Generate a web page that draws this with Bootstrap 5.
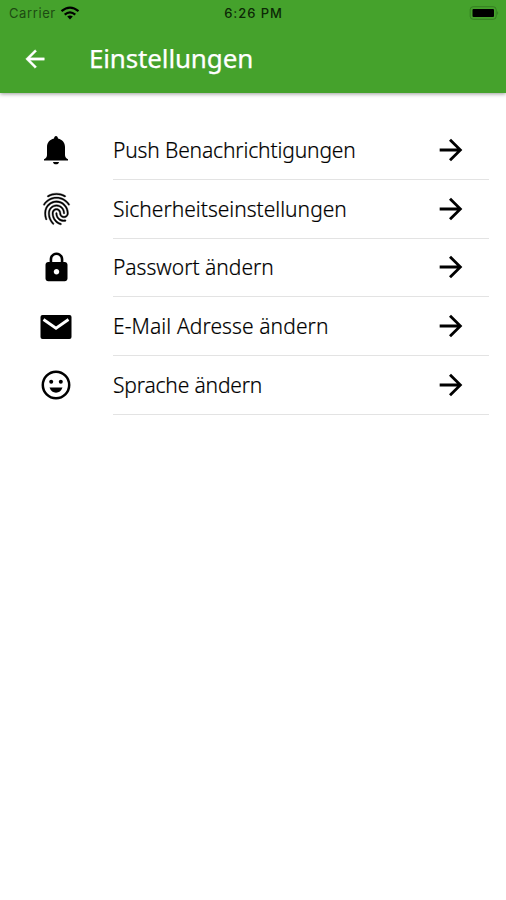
<!DOCTYPE html>
<html lang="de">
<head>
<meta charset="utf-8">
<meta name="viewport" content="width=device-width, initial-scale=1">
<title>Einstellungen</title>
<link rel="stylesheet" href="https://cdn.jsdelivr.net/npm/bootstrap@5.3.0/dist/css/bootstrap.min.css">
<style>
body{font-family:"Noto Sans",sans-serif;color:#000;min-height:900px}
svg{display:block;flex:none}
.app-top{background:#45a22c;height:93px;box-shadow:0 1px 4px rgba(0,0,0,.4)}
.status{height:26px;padding:0 7px 0 9px;font:13px/26px Inter,sans-serif;color:#0c2806;display:grid;grid-template-columns:1fr auto 1fr}
.carrier{letter-spacing:.6px;color:#1d4a12}
.clock{font-weight:500;letter-spacing:.95px;margin-left:-1px}
.titlebar{height:66px;padding-left:21px}
.titlebar h1{font-size:26px;line-height:64px;margin:0 0 2px 40px;font-weight:400;letter-spacing:-.15px;-webkit-text-stroke:.25px #fff}
.settings{padding:28px 17px 0 0}
.setting{height:58.75px;color:#000}
.glyph{width:113px;padding-right:1px}
.line{border-bottom:1.5px solid #e3e3e3;padding-right:21px}
.label{font-size:21px;font-weight:300;line-height:30px;white-space:nowrap;-webkit-text-stroke:.2px #000}
.l1{letter-spacing:-.14px}
.l4{letter-spacing:.1px}
.l5{letter-spacing:-.16px}
</style>
<script src="https://cdn.jsdelivr.net/npm/bootstrap@5.3.0/dist/js/bootstrap.bundle.min.js"></script>
</head>
<body class="bg-white">
<header class="app-top">
  <div class="status">
    <div class="d-flex align-items-center gap-1"><span class="carrier">Carrier</span>
      <svg width="20" height="15" viewBox="0 0 20 15" fill="none" stroke="#000" stroke-width="2.2"><path d="M1.500 5.200Q10-1.800 18.500 5.200M4.700 8.700Q10 4.200 15.300 8.700"/><path d="M7.200 10.600Q10 8.400 12.800 10.600L10 13.400Z" fill="#000" stroke="none"/></svg>
    </div>
    <span class="clock">6:26 PM</span>
    <div class="d-flex align-items-center justify-content-end">
      <svg width="30" height="14" viewBox="0 0 30 14"><rect x="1.200" y=".7" width="26" height="12.600" rx="3" fill="none" stroke="#357e22"/><rect x="3.500" y="3" width="21.500" height="8" rx="1" fill="#000"/><path d="M28.200 5q2 2 0 4z" fill="#357e22"/></svg>
    </div>
  </div>
  <div class="titlebar d-flex align-items-center text-white">
    <svg width="28" height="28" viewBox="0 0 24 24" fill="#fff" stroke="#fff" stroke-width=".3"><path d="M20 11H7.830l5.590-5.590L12 4l-8 8 8 8 1.410-1.410L7.830 13H20z"/></svg>
    <h1>Einstellungen</h1>
  </div>
</header>
<main class="settings">
  <a href="#" class="setting d-flex text-decoration-none">
    <span class="glyph d-flex align-items-center justify-content-center"><svg width="32" height="32" viewBox="0 0 32 32"><path d="M16 2c1.200 0 1.800.9 2 2.400 4.400 1.100 7 4.100 7 8.600v8c0 2 1 3.200 3 4.200V26.500H4v-1.300c2-1 3-2.200 3-4.200v-8c0-4.500 2.600-7.500 7-8.600C14.200 2.900 14.800 2 16 2zM13 28h6c-.2 1.500-1.300 2.300-3 2.300s-2.800-.8-3-2.300z"/></svg></span>
    <span class="line flex-grow-1 d-flex align-items-center justify-content-between"><span class="label l1">Push Benachrichtigungen</span><svg width="34" height="34" viewBox="0 0 24 24"><path d="M12 4l-1.410 1.410L16.170 11H4v2h12.170l-5.580 5.590L12 20l8-8z"/></svg></span>
  </a>
  <a href="#" class="setting d-flex text-decoration-none">
    <span class="glyph d-flex align-items-center justify-content-center"><svg width="35" height="38" viewBox="0 0 24 24" preserveAspectRatio="none"><path stroke="#000" stroke-width=".25" d="M17.81 4.47c-.08 0-.16-.02-.23-.06C15.66 3.42 14 3 12.010 3c-1.980 0-3.860.470-5.570 1.410-.24.130-.54.040-.68-.2-.13-.24-.04-.55.2-.68C7.820 2.520 9.860 2 12.010 2c2.130 0 3.990.470 6.030 1.520.25.130.34.430.21.670-.09.18-.26.28-.44.28zM3.500 9.720c-.1 0-.2-.03-.29-.09-.23-.16-.28-.47-.12-.7.99-1.400 2.250-2.500 3.750-3.270C9.980 4.040 14 4.030 17.150 5.650c1.500.77 2.760 1.860 3.750 3.250.16.220.11.540-.12.700-.23.160-.54.110-.7-.12-.9-1.260-2.040-2.250-3.390-2.940-2.870-1.470-6.540-1.470-9.400.010-1.360.7-2.500 1.700-3.400 2.960-.08.140-.23.210-.39.210zm6.250 12.070c-.13 0-.26-.05-.35-.15-.87-.87-1.340-1.430-2.010-2.640-.69-1.230-1.050-2.730-1.050-4.340 0-2.970 2.540-5.390 5.660-5.390s5.660 2.420 5.660 5.390c0 .28-.22.500-.5.500s-.5-.22-.5-.5c0-2.420-2.090-4.390-4.660-4.390-2.570 0-4.660 1.970-4.660 4.390 0 1.440.320 2.770.930 3.850.640 1.150 1.080 1.640 1.850 2.420.19.200.19.510 0 .71-.11.100-.24.150-.37.150zm7.170-1.850c-1.190 0-2.240-.3-3.100-.89-1.490-1.010-2.380-2.650-2.380-4.390 0-.28.220-.5.500-.5s.5.220.5.500c0 1.410.720 2.740 1.940 3.560.71.480 1.540.71 2.540.71.240 0 .64-.03 1.040-.1.270-.05.530.130.580.410.050.27-.13.530-.41.580-.57.110-1.070.120-1.210.120zM14.910 22c-.04 0-.09-.01-.13-.02-1.590-.44-2.630-1.030-3.720-2.100-1.400-1.390-2.170-3.240-2.170-5.220 0-1.620 1.380-2.940 3.080-2.940 1.700 0 3.080 1.320 3.080 2.940 0 1.070.930 1.940 2.080 1.940s2.080-.87 2.080-1.940c0-3.770-3.250-6.830-7.250-6.830-2.840 0-5.440 1.580-6.610 4.030-.39.810-.59 1.760-.59 2.800 0 .78.070 2.010.670 3.610.1.260-.03.550-.29.640-.26.100-.55-.04-.64-.29-.49-1.310-.73-2.610-.73-3.960 0-1.200.23-2.290.68-3.240 1.330-2.790 4.280-4.600 7.510-4.600 4.550 0 8.250 3.510 8.250 7.830 0 1.620-1.380 2.940-3.080 2.940s-3.080-1.320-3.080-2.940c0-1.070-.93-1.940-2.080-1.940s-2.080.87-2.080 1.940c0 1.710.66 3.310 1.870 4.510.95.940 1.860 1.460 3.270 1.850.27.070.42.350.35.610-.05.230-.26.380-.47.380z"/></svg></span>
    <span class="line flex-grow-1 d-flex align-items-center justify-content-between"><span class="label l2">Sicherheitseinstellungen</span><svg width="34" height="34" viewBox="0 0 24 24"><path d="M12 4l-1.410 1.410L16.170 11H4v2h12.170l-5.580 5.590L12 20l8-8z"/></svg></span>
  </a>
  <a href="#" class="setting d-flex text-decoration-none">
    <span class="glyph d-flex align-items-center justify-content-center"><svg width="33" height="33" viewBox="0 0 24 24"><path d="M18 8h-1V6c0-2.760-2.240-5-5-5S7 3.240 7 6v2H6c-1.100 0-2 .9-2 2v10c0 1.100.9 2 2 2h12c1.100 0 2-.9 2-2V10c0-1.100-.9-2-2-2zm-6 9c-1.100 0-2-.9-2-2s.9-2 2-2 2 .9 2 2-.9 2-2 2zm3.100-9H8.900V6c0-1.710 1.390-3.100 3.100-3.100s3.100 1.390 3.100 3.100v2z"/></svg></span>
    <span class="line flex-grow-1 d-flex align-items-center justify-content-between"><span class="label l3">Passwort ändern</span><svg width="34" height="34" viewBox="0 0 24 24"><path d="M12 4l-1.410 1.410L16.170 11H4v2h12.170l-5.580 5.590L12 20l8-8z"/></svg></span>
  </a>
  <a href="#" class="setting d-flex text-decoration-none">
    <span class="glyph d-flex align-items-center justify-content-center"><svg width="32" height="26" viewBox="0 0 32 26"><rect x=".5" y="1" width="31" height="24" rx="2"/><path d="M3.500 5.500L16 14.200 28.500 5.500" fill="none" stroke="#fff" stroke-width="2.800"/></svg></span>
    <span class="line flex-grow-1 d-flex align-items-center justify-content-between"><span class="label l4">E-Mail Adresse ändern</span><svg width="34" height="34" viewBox="0 0 24 24"><path d="M12 4l-1.410 1.410L16.170 11H4v2h12.170l-5.580 5.590L12 20l8-8z"/></svg></span>
  </a>
  <a href="#" class="setting d-flex text-decoration-none">
    <span class="glyph d-flex align-items-center justify-content-center"><svg width="30" height="30" viewBox="0 0 30 30"><circle cx="15" cy="15" r="13.200" fill="none" stroke="#000" stroke-width="2.500"/><circle cx="10.200" cy="11.700" r="2"/><circle cx="19.800" cy="11.700" r="2"/><path d="M8.500 17.500h13q-2 5.200-6.500 5.200t-6.500-5.200z"/></svg></span>
    <span class="line flex-grow-1 d-flex align-items-center justify-content-between"><span class="label l5">Sprache ändern</span><svg width="34" height="34" viewBox="0 0 24 24"><path d="M12 4l-1.410 1.410L16.170 11H4v2h12.170l-5.580 5.590L12 20l8-8z"/></svg></span>
  </a>
</main>
</body>
</html>
